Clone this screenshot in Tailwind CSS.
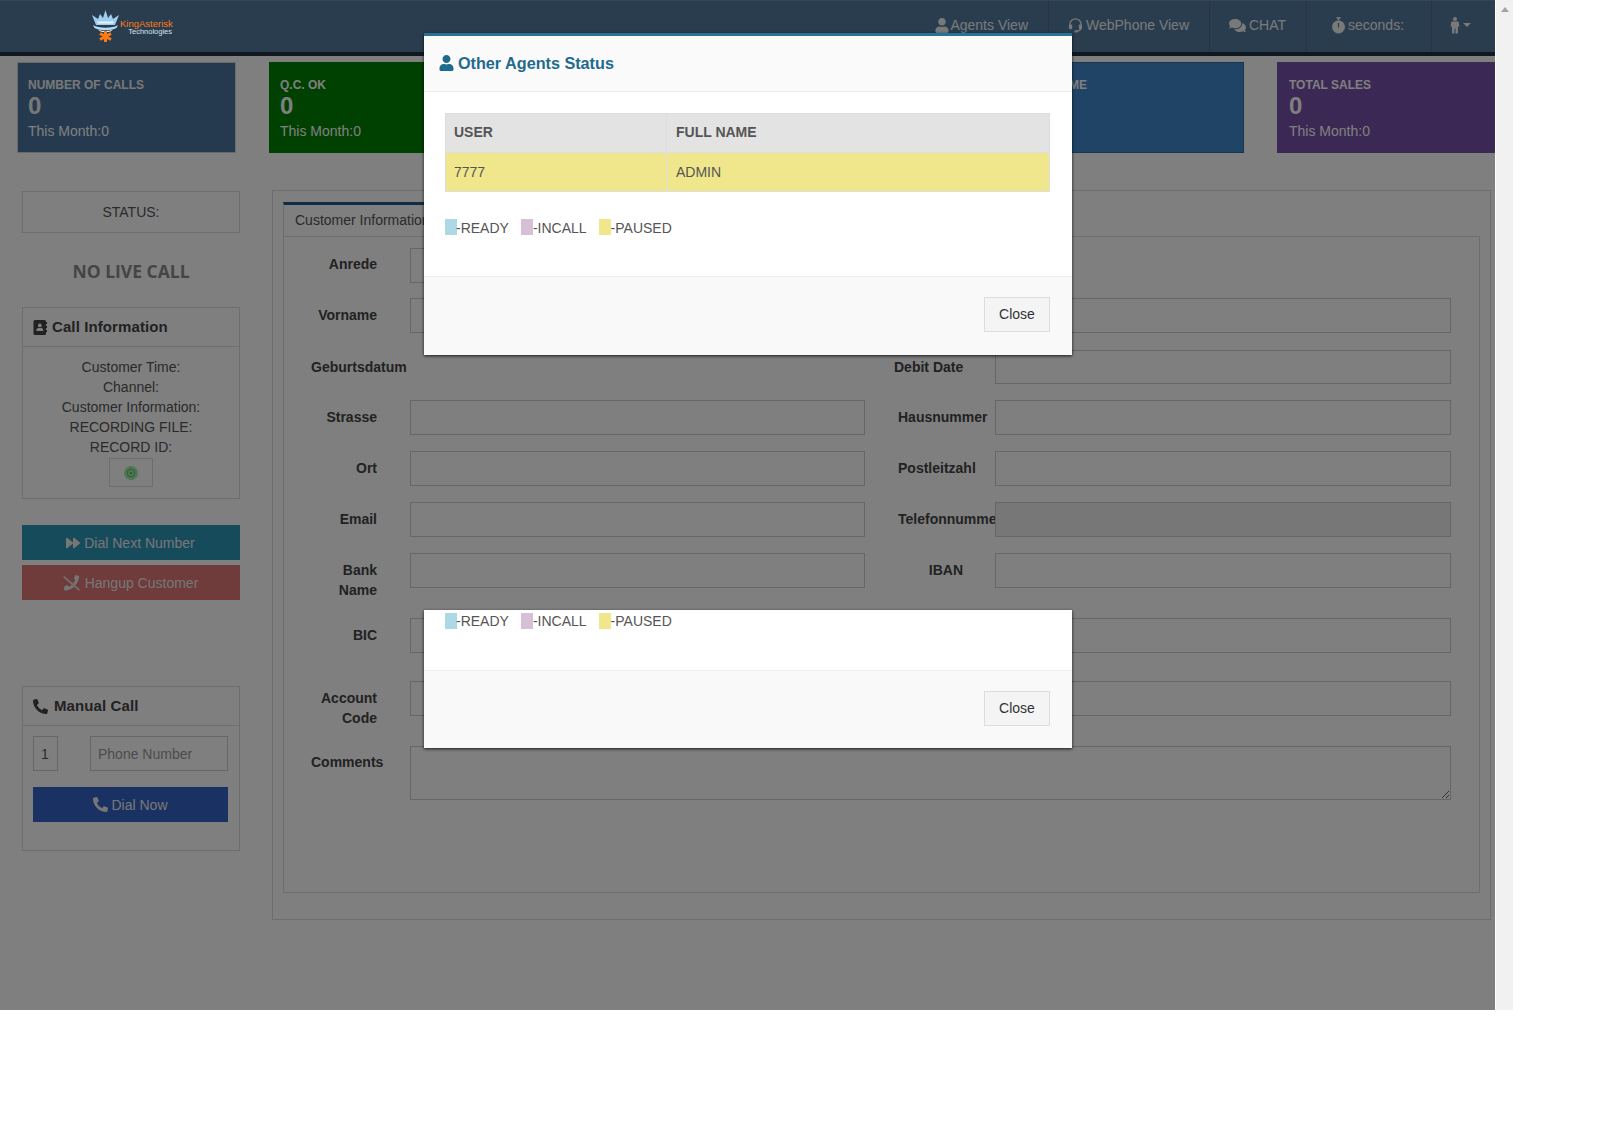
<!DOCTYPE html>
<html lang="en">
<head>
<meta charset="utf-8"/>
<title>Agent Screen</title>
<script src="https://cdn.jsdelivr.net/npm/@tailwindcss/browser@4"></script>
</head>
<body class="bg-white font-['Liberation_Sans',Arial,sans-serif] text-[14px] leading-[20px] text-[#555]">
<div class="flex h-[1123px] items-start">
  <div class="relative w-[1495px] h-[1010px] overflow-hidden bg-white shrink-0">
    <!-- header -->
    <header class="flex h-[56px] items-stretch justify-between bg-[#547a9f] border-t border-[#6a8cac] border-b-[4px] border-b-[#1f3040] text-[#f2f2f2]">
      <!-- logo sits above the backdrop, it keeps its full colours in the screenshot -->
      <div class="relative z-10 flex pl-[90px] items-start pt-[8px]">
        <svg width="30" height="34" viewBox="0 0 30 34" class="shrink-0">
          <path d="M2 6l6 4 2-5 3 4 2.500-8 2.500 8 3-4 2 5 6-4-4 10H6z" fill="#9fcdef"/>
          <path d="M7 12.500h17l-1 2H8z" fill="#e4f3fd"/>
          <path d="M3 16c5 3.500 20 3.500 25 0l-1.500 3c-6 3-16 3-22 0z" fill="#b6dcf5"/>
          <path d="M8 20.500c5 2 10 2 15 0l-2.500 2c-3 1-7 1-10 0z" fill="#e4f3fd"/>
          <g stroke="#ff7a12" stroke-width="3"><path d="M15.500 22v11"/><path d="M10 24.500l11 6"/><path d="M21 24.500l-11 6"/></g>
        </svg>
        <div class="w-[52px] mt-[10px] text-right">
          <div class="text-[9.500px] leading-[9px] text-[#ff7a12] whitespace-nowrap">KingAsterisk</div>
          <div class="text-[7.500px] leading-[8px] text-[#cfe6f7] whitespace-nowrap">Technologies</div>
        </div>
      </div>
      <nav class="flex items-stretch">
        <a class="flex items-center gap-[1px] pl-[20px] pr-[20px] pb-[3px] border-r border-[#486a8a]">
          <svg class="w-[14px] h-[15px]" viewBox="0 0 448 512" fill="currentColor"><path d="M224 256c70.700 0 128-57.300 128-128S294.700 0 224 0 96 57.300 96 128s57.300 128 128 128zm89.600 32h-16.700c-22.200 10.200-46.900 16-72.900 16s-50.600-5.800-72.900-16h-16.700C60.200 288 0 348.200 0 422.400V464c0 26.500 21.500 48 48 48h352c26.500 0 48-21.500 48-48v-41.600c0-74.200-60.200-134.400-134.400-134.400z"/></svg>
          Agents View
        </a>
        <a class="flex items-center gap-[3px] w-[161px] pl-[19px] pb-[3px] border-r border-[#486a8a]">
          <svg class="w-[15px] h-[16px]" viewBox="0 0 16 17" fill="none" stroke="currentColor"><path d="M2 10V8a6 6 0 0 1 12 0v2M14 11c0 3-2 4-5 4" stroke-width="1.400"/><rect x="1" y="8" width="3.500" height="5" rx="1.200" fill="currentColor" stroke="none"/><rect x="11.500" y="8" width="3.500" height="5" rx="1.200" fill="currentColor" stroke="none"/><rect x="7" y="14" width="3.500" height="2.400" rx="1" fill="currentColor" stroke="none"/></svg>
          WebPhone View
        </a>
        <a class="flex items-center gap-[3px] w-[97px] pl-[19px] pb-[3px] border-r border-[#486a8a]">
          <svg class="w-[17px] h-[15px]" viewBox="0 0 576 512" fill="currentColor"><path d="M416 192c0-88.400-93.100-160-208-160S0 103.600 0 192c0 34.300 14.100 65.900 38 92-13.400 30.200-35.500 54.200-35.800 54.500-2.200 2.300-2.800 5.700-1.500 8.700S4.800 352 8 352c36.600 0 66.900-12.300 88.700-25 32.200 15.700 70.300 25 111.300 25 114.900 0 208-71.600 208-160zm122 220c23.900-26 38-57.700 38-92 0-66.900-53.500-124.200-129.300-148.100.9 6.600 1.300 13.300 1.300 20.100 0 105.900-107.700 192-240 192-10.800 0-21.300-.8-31.700-1.900C207.800 439.600 281.800 480 368 480c41 0 79.100-9.200 111.300-25 21.800 12.700 52.100 25 88.700 25 3.200 0 6.100-1.900 7.300-4.800 1.300-2.900.7-6.300-1.500-8.700-.3-.3-22.400-24.200-35.800-54.500z"/></svg>
          CHAT
        </a>
        <a class="flex items-center gap-[3px] w-[125px] pl-[25px] pb-[3px] border-r border-[#486a8a]">
          <svg class="w-[13px] h-[17px]" viewBox="0 0 13 17" fill="currentColor"><rect x="4.500" y="0" width="4" height="1.600"/><rect x="5.600" y="1.500" width="1.800" height="2"/><path d="M6.500 3.400a6.500 6.500 0 1 0 0 13 6.500 6.500 0 0 0 0-13zm.6 7.200H5.900V6h1.200z"/></svg>
          seconds:
        </a>
        <a class="flex items-center gap-[3px] w-[63px] pl-[18px] pb-[3px]">
          <svg class="w-[10px] h-[17px]" viewBox="0 0 10 17" fill="currentColor"><circle cx="5" cy="2" r="2"/><path d="M1.500 4.500h7l1 5H8v7H5.500v-5h-1v5H2v-7H.500z"/></svg>
          <span class="w-0 h-0 border-x-[4px] border-x-transparent border-t-[4px] border-t-current"></span>
        </a>
      </nav>
    </header>

    <!-- stat cards -->
    <section class="flex gap-[33px] pl-[17px] pt-[6px] text-white">
      <div class="w-[219px] h-[91px] shrink-0 bg-[#4a749e] border border-[#d5d5d5] pl-[10px] pt-[14px]">
        <div class="text-[12px] leading-[16px] font-bold text-[#f0f0f0]">NUMBER OF CALLS</div>
        <div class="text-[24px] leading-[26px] font-bold text-[#f0f0f0]">0</div>
        <div class="mt-[2px]">This Month:0</div>
      </div>
      <div class="w-[219px] h-[91px] shrink-0 bg-[#008000] pl-[11px] pt-[15px]">
        <div class="text-[12px] leading-[16px] font-bold">Q.C. OK</div>
        <div class="text-[24px] leading-[26px] font-bold">0</div>
        <div class="mt-[2px]">This Month:0</div>
      </div>
      <div class="w-[219px] h-[91px] shrink-0 bg-[#c9302c]"></div>
      <div class="w-[219px] h-[91px] shrink-0 bg-[#31708f]"></div>
      <div class="w-[219px] h-[91px] shrink-0 bg-[#3e88ca] border border-[#2e6da4] pl-[3px] pt-[14px]">
        <div class="text-[12px] leading-[16px] font-bold">LOG TIME</div>
      </div>
      <div class="w-[219px] h-[91px] shrink-0 bg-[#7650aa] pl-[12px] pt-[15px]">
        <div class="text-[12px] leading-[16px] font-bold">TOTAL SALES</div>
        <div class="text-[24px] leading-[26px] font-bold">0</div>
        <div class="mt-[2px]">This Month:0</div>
      </div>
    </section>

    <div class="flex gap-[32px] pl-[22px] pt-[37px]">
      <!-- left column -->
      <aside class="w-[218px] shrink-0 text-center pt-[1px]">
        <div class="h-[42px] border border-[#ddd] flex items-center justify-center">STATUS:</div>
        <div class="h-[74px] flex items-center justify-center pt-[1px] font-['Open_Sans',sans-serif] font-bold text-[17.500px] text-[#8a8a8a]">NO LIVE CALL</div>

        <div class="h-[192px] border border-[#ddd]">
          <div class="h-[39px] border-b border-[#ddd] flex items-center pl-[10px] gap-[5px] font-bold text-[15px] tracking-[.1px] text-[#444]">
            <svg class="w-[14px] h-[15px]" viewBox="0 0 14 15" fill="currentColor"><path d="M2 0h9.500A1.500 1.500 0 0 1 13 1.500v12a1.500 1.500 0 0 1-1.500 1.500H2A1.500 1.500 0 0 1 .5 13.500v-12A1.500 1.500 0 0 1 2 0zm4.800 3.500a1.900 1.900 0 1 0 0 3.800 1.900 1.900 0 0 0 0-3.800zM3.300 11h7c.2-2-1-3-2-3H5.300c-1 0-2.200 1-2 3z" fill-rule="evenodd"/><rect x="13" y="2" width="1" height="2"/><rect x="13" y="6" width="1" height="2"/><rect x="13" y="10" width="1" height="2"/></svg>
            Call Information
          </div>
          <div class="pt-[10px]">
            <div>Customer Time:</div>
            <div>Channel:</div>
            <div>Customer Information:</div>
            <div>RECORDING FILE:</div>
            <div>RECORD ID:</div>
            <div class="mx-auto mt-[1px] w-[44px] h-[29px] border border-[#ddd] flex items-center justify-center">
              <svg class="w-[14px] h-[14px]" viewBox="0 0 14 14"><circle cx="7" cy="7" r="7" fill="#9cf0a0"/><circle cx="7" cy="7" r="3.800" fill="none" stroke="#6cb070" stroke-width="1"/><circle cx="7" cy="7" r="1.300" fill="#6cb070"/></svg>
            </div>
          </div>
        </div>

        <button class="mt-[26px] w-full h-[35px] bg-[#2c96b8] flex items-center justify-center gap-[4px] pr-[1px] text-[#ededed]">
          <svg class="w-[14px] h-[14px]" viewBox="0 0 512 512" fill="currentColor"><path d="M500.500 231.400l-192-160C287.900 54.300 256 68.600 256 96v320c0 27.400 31.900 41.800 52.500 24.600l192-160c15.300-12.800 15.300-36.400 0-49.200zm-256 0l-192-160C31.900 54.300 0 68.600 0 96v320c0 27.400 31.900 41.800 52.500 24.600l192-160c15.300-12.800 15.300-36.400 0-49.200z"/></svg>
          Dial Next Number
        </button>
        <button class="mt-[5px] w-full h-[35px] bg-[#de7676] flex items-center justify-center gap-[4px] pr-[1px] text-[#ededed]">
          <svg class="w-[18px] h-[16px]" viewBox="0 0 18 16" fill="currentColor"><path d="M12.500 0l-1.700 3.200 1.700 2L9.800 8.600 6.500 12 3.800 10 1.200 11.800 1 14c0 1 .5 1.500 1.500 1.500 4-.3 7-2 9.500-4.800 2-2.300 3.500-5 4-8.200L16 1z"/><path d="M1 .8l16 13.500-1.300 1.500L0 2.300z" stroke="#de7676" stroke-width=".4"/></svg>
          Hangup Customer
        </button>

        <div class="mt-[86px] h-[165px] border border-[#ddd] text-left">
          <div class="h-[39px] border-b border-[#ddd] flex items-center pl-[10px] gap-[6px] font-bold text-[15px] tracking-[.1px] text-[#444]">
            <svg class="w-[15px] h-[15px]" viewBox="0 0 512 512" fill="currentColor"><path d="M497.390 361.800l-112-48a24 24 0 0 0-28 6.900l-49.600 60.600A370.660 370.660 0 0 1 130.600 204.110l60.600-49.600a23.940 23.940 0 0 0 6.900-28l-48-112A24.160 24.160 0 0 0 122.600.610l-104 24A24 24 0 0 0 0 48c0 256.500 207.900 464 464 464a24 24 0 0 0 23.400-18.600l24-104a24.290 24.290 0 0 0-14.010-27.600z"/></svg>
            Manual Call
          </div>
          <div class="flex justify-between pl-[10px] pr-[11px] pt-[10px]">
            <input class="w-[25px] h-[35px] border border-[#ccc] px-[7px] text-[14px] text-[#555]" value="1"/>
            <input class="w-[138px] h-[35px] border border-[#ccc] px-[7px] text-[14px] placeholder:text-[#999]" placeholder="Phone Number"/>
          </div>
          <button class="mt-[16px] ml-[10px] w-[195px] h-[35px] bg-[#3463c6] flex items-center justify-center gap-[3px] text-[#ededed]">
            <svg class="w-[15px] h-[15px]" viewBox="0 0 512 512" fill="currentColor"><path d="M497.390 361.800l-112-48a24 24 0 0 0-28 6.900l-49.600 60.600A370.660 370.660 0 0 1 130.600 204.110l60.600-49.600a23.940 23.940 0 0 0 6.900-28l-48-112A24.160 24.160 0 0 0 122.600.610l-104 24A24 24 0 0 0 0 48c0 256.500 207.900 464 464 464a24 24 0 0 0 23.400-18.600l24-104a24.290 24.290 0 0 0-14.010-27.600z"/></svg>
            Dial Now
          </button>
        </div>
      </aside>

      <!-- customer form -->
      <main class="w-[1219px] h-[730px] shrink-0 border border-[#ddd] pl-[10px] pr-[10px] pt-[11px]">
        <div class="w-[170px] h-[35px] border-t-[3px] border-t-[#1d5a8a] border-x border-x-[#ddd] pl-[11px] pt-[5px] text-[#555]">Customer Information</div>
        <div class="h-[657px] -mt-px border border-[#ddd] pl-[27px] pt-[11px] font-bold text-[#444]">
          <div class="flex h-[35px]">
            <label class="w-[66px] shrink-0 text-right pt-[6px]">Anrede</label>
            <input class="ml-[33px] w-[455px] h-[35px] border border-[#ccc]"/>
          </div>
          <div class="flex mt-[15px]">
            <label class="w-[66px] shrink-0 text-right pt-[7px]">Vorname</label>
            <input class="ml-[33px] w-[455px] h-[35px] border border-[#ccc]"/>
            <label class="ml-[33px] w-[65px] shrink-0 text-right pt-[7px]"></label>
            <input class="ml-[32px] w-[456px] h-[35px] border border-[#ccc]"/>
          </div>
          <div class="flex mt-[17px]">
            <label class="w-[66px] shrink-0 text-right pt-[7px]">Geburtsdatum</label>
            <div class="ml-[33px] w-[455px] h-[34px] shrink-0"></div>
            <label class="ml-[29px] w-[69px] shrink-0 whitespace-nowrap text-right pt-[7px]">Debit Date</label>
            <input class="ml-[32px] w-[456px] h-[34px] border border-[#ccc]"/>
          </div>
          <div class="flex mt-[16px]">
            <label class="w-[66px] shrink-0 text-right pt-[7px]">Strasse</label>
            <input class="ml-[33px] w-[455px] h-[35px] border border-[#ccc]"/>
            <label class="ml-[33px] w-[65px] shrink-0 text-right pt-[7px]">Hausnummer</label>
            <input class="ml-[32px] w-[456px] h-[35px] border border-[#ccc]"/>
          </div>
          <div class="flex mt-[16px]">
            <label class="w-[66px] shrink-0 text-right pt-[7px]">Ort</label>
            <input class="ml-[33px] w-[455px] h-[35px] border border-[#ccc]"/>
            <label class="ml-[33px] w-[65px] shrink-0 text-right pt-[7px]">Postleitzahl</label>
            <input class="ml-[32px] w-[456px] h-[35px] border border-[#ccc]"/>
          </div>
          <div class="flex mt-[16px]">
            <label class="w-[66px] shrink-0 text-right pt-[7px]">Email</label>
            <input class="ml-[33px] w-[455px] h-[35px] border border-[#ccc]"/>
            <label class="ml-[33px] w-[65px] shrink-0 text-right pt-[7px]">Telefonnummer</label>
            <input class="ml-[32px] w-[456px] h-[35px] border border-[#ccc] bg-[#eee]" disabled/>
          </div>
          <div class="flex mt-[16px]">
            <label class="w-[66px] shrink-0 text-right pt-[7px]">Bank Name</label>
            <input class="ml-[33px] w-[455px] h-[35px] border border-[#ccc]"/>
            <label class="ml-[33px] w-[65px] shrink-0 text-right pt-[7px]">IBAN</label>
            <input class="ml-[32px] w-[456px] h-[35px] border border-[#ccc]"/>
          </div>
          <div class="flex mt-[18px]">
            <label class="w-[66px] shrink-0 text-right pt-[7px]">BIC</label>
            <input class="ml-[33px] w-[455px] h-[35px] border border-[#ccc]"/>
            <label class="ml-[33px] w-[65px] shrink-0 text-right pt-[7px]"></label>
            <input class="ml-[32px] w-[456px] h-[35px] border border-[#ccc]"/>
          </div>
          <div class="flex mt-[28px] h-[35px]">
            <label class="w-[66px] shrink-0 text-right pt-[7px]">Account Code</label>
            <input class="ml-[33px] w-[455px] h-[35px] border border-[#ccc]"/>
            <label class="ml-[33px] w-[65px] shrink-0 text-right pt-[7px]"></label>
            <input class="ml-[32px] w-[456px] h-[35px] border border-[#ccc]"/>
          </div>
          <div class="flex mt-[30px]">
            <label class="w-[66px] shrink-0 text-right pt-[6px]">Comments</label>
            <textarea class="ml-[33px] w-[1041px] h-[54px] border border-[#ccc] block"></textarea>
          </div>
        </div>
      </main>
    </div>

    <!-- backdrop -->
    <div class="absolute inset-0 bg-black/50"></div>

    <!-- status modal -->
    <div class="absolute z-20 left-[424px] top-[33px] w-[648px] bg-white border-t-[3px] border-t-[#2a7196] shadow-[0_1px_3px_rgba(0,0,0,.8)]">
      <div class="h-[56px] bg-[#fafafa] border-b border-[#eee] flex items-center gap-[4px] pl-[15px] pb-[2px] text-[16.200px] font-bold text-[#1f6a8e]">
        <svg class="w-[15px] h-[16px]" viewBox="0 0 448 512" fill="currentColor"><path d="M224 256c70.700 0 128-57.300 128-128S294.700 0 224 0 96 57.300 96 128s57.300 128 128 128zm89.600 32h-16.700c-22.200 10.200-46.900 16-72.900 16s-50.600-5.800-72.900-16h-16.700C60.200 288 0 348.200 0 422.400V464c0 26.500 21.500 48 48 48h352c26.500 0 48-21.500 48-48v-41.600c0-74.200-60.200-134.400-134.400-134.400z"/></svg>
        Other Agents Status
      </div>
      <div class="h-[184px] pl-[21px] pr-[22px] pt-[21px]">
        <table class="w-[605px] border-collapse table-fixed">
          <tr class="bg-[#e3e3e3] font-bold">
            <th class="w-[221px] h-[39px] border border-[#ddd] pl-[8px] pb-[3px] text-left">USER</th>
            <th class="h-[39px] border border-[#ddd] pl-[9px] pb-[3px] text-left">FULL NAME</th>
          </tr>
          <tr class="bg-[#f0e68c]">
            <td class="h-[39px] border border-[#ddd] pl-[8px]">7777</td>
            <td class="h-[39px] border border-[#ddd] pl-[9px]">ADMIN</td>
          </tr>
        </table>
        <div class="flex mt-[27px]">
          <span class="w-[12px] h-[16px] bg-[#add8e6]"></span><span class="-ml-px -mt-px">-READY</span>
          <span class="ml-[12px] w-[12px] h-[16px] bg-[#d8bfd8]"></span><span class="-mt-px">-INCALL</span>
          <span class="ml-[12px] w-[12px] h-[16px] bg-[#f0e68c]"></span><span class="-mt-px">-PAUSED</span>
        </div>
      </div>
      <div class="h-[79px] bg-[#f9f9f9] border-t border-[#eee] flex justify-end pr-[22px] pt-[20px]">
        <button class="w-[66px] h-[35px] bg-[#f4f4f4] border border-[#ddd] text-[#333] pb-[2px]">Close</button>
      </div>
    </div>

    <!-- second modal showing through -->
    <div class="absolute z-20 left-[424px] top-[610px] w-[648px] bg-white shadow-[0_1px_3px_rgba(0,0,0,.8)]">
      <div class="h-[60px] pl-[21px] pr-[22px] pt-[1px]">
        <div class="flex">
          <span class="w-[12px] h-[16px] mt-[2px] bg-[#add8e6]"></span><span class="-ml-px">-READY</span>
          <span class="ml-[12px] w-[12px] h-[16px] mt-[2px] bg-[#d8bfd8]"></span><span>-INCALL</span>
          <span class="ml-[12px] w-[12px] h-[16px] mt-[2px] bg-[#f0e68c]"></span><span>-PAUSED</span>
        </div>
      </div>
      <div class="h-[78px] bg-[#f9f9f9] border-t border-[#eee] flex justify-end pr-[22px] pt-[20px]">
        <button class="w-[66px] h-[35px] bg-[#f4f4f4] border border-[#ddd] text-[#333] pb-[2px]">Close</button>
      </div>
    </div>
  </div>

  <!-- scrollbar -->
  <div class="ml-px w-[17px] h-[1010px] bg-[#f1f1f1] flex justify-center pt-[7px]">
    <span class="w-0 h-0 border-x-[4px] border-x-transparent border-b-[5px] border-b-[#a3a3a3]"></span>
  </div>
</div>
</body>
</html>
